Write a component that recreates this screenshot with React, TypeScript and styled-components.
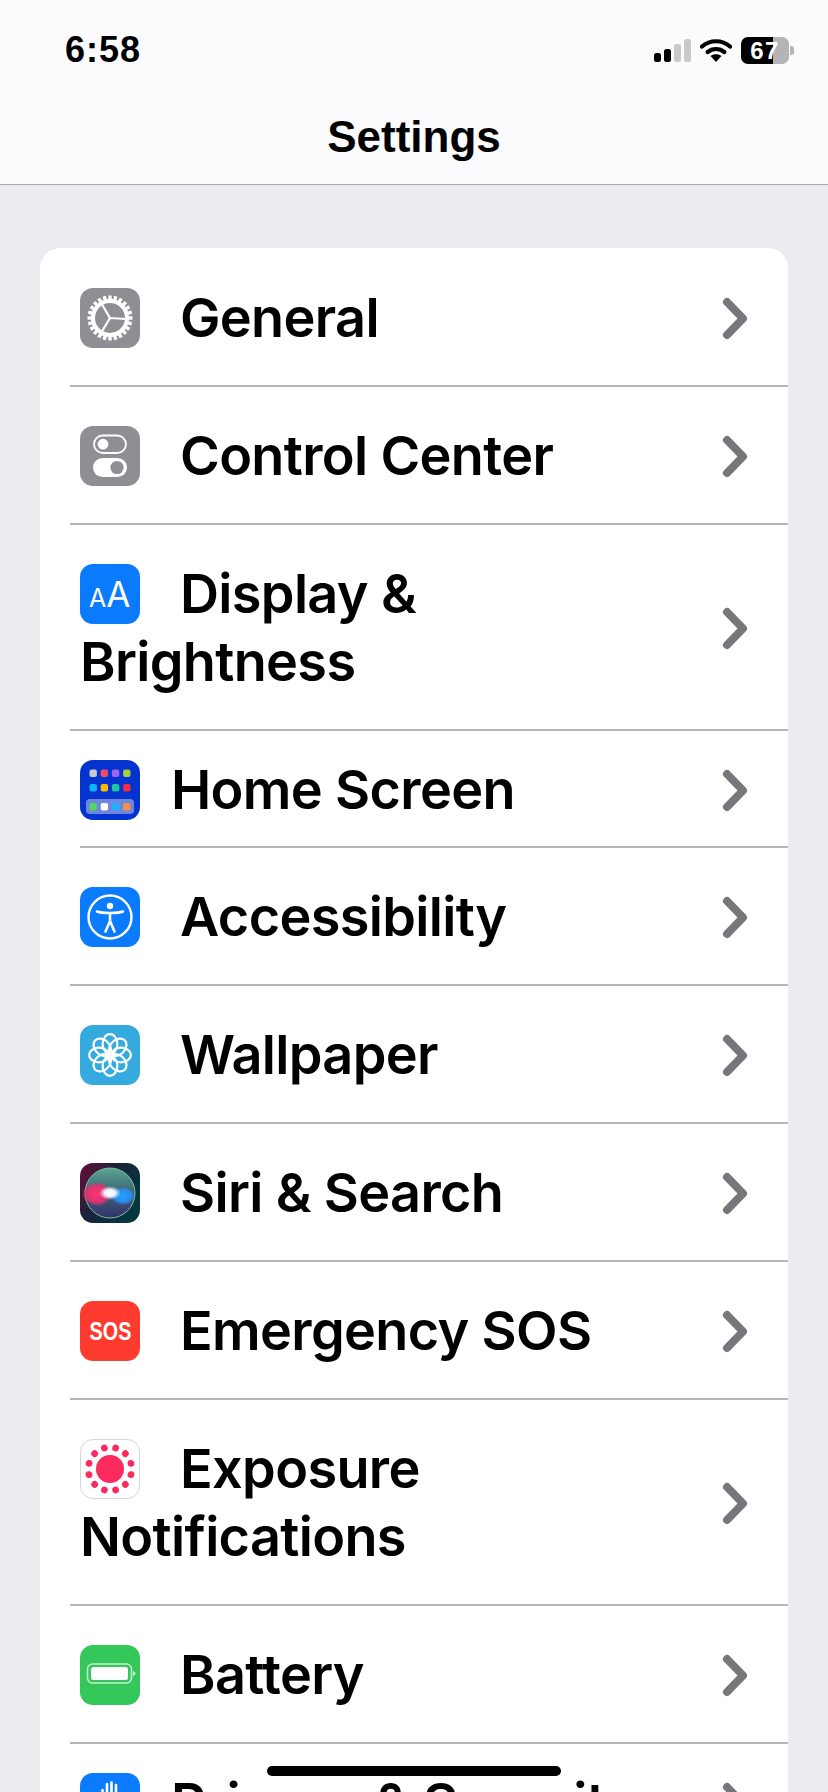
import React from 'react';
import styled, { createGlobalStyle } from 'styled-components';

const GlobalStyle = createGlobalStyle`
    html, body {
        margin: 0;
        padding: 0;
        height: 1792px;
        overflow: hidden;
        background: #ebebf0;
        font-family: Inter, "Liberation Sans", sans-serif;
    }
`;

const Page = styled.div`
    position: relative;
    width: 828px;
    height: 1792px;
    overflow: hidden;
    background: #ebebf0;
`;

const NavBar = styled.header`
    height: 184px;
    background: #fbfbfe;
    border-bottom: 1px solid #a9a9ac;
    display: flex;
    flex-direction: column;
`;

const StatusBar = styled.div`
    display: flex;
    justify-content: space-between;
    align-items: center;
    height: 50px;
    padding: 25px 34px 0 65px;
`;

const Clock = styled.span`
    font-family: "Liberation Sans", sans-serif;
    font-weight: 700;
    font-size: 36px;
    letter-spacing: 1px;
    color: #000;
`;

const StatusIcons = styled.div`
    display: flex;
    align-items: center;
    gap: 9px;
`;

const BatteryBody = styled.div`
    width: 48px;
    height: 27px;
    border-radius: 7px;
    overflow: hidden;
    background: linear-gradient(to right, #000 0 67%, #b4b4b6 67% 100%);
    color: #fff;
    font-family: "Liberation Sans", sans-serif;
    font-weight: 700;
    font-size: 24px;
    line-height: 27px;
    text-align: center;
    letter-spacing: 1.5px;
`;

const BatteryWrap = styled.div`
    display: flex;
    align-items: center;
    gap: 1px;
`;

const BatteryNub = styled.div`
    width: 4px;
    height: 9px;
    border-radius: 0 3px 3px 0;
    background: #b4b4b6;
`;

const Title = styled.h1`
    margin: 0;
    padding-top: 39px;
    text-align: center;
    font-family: "Liberation Sans", sans-serif;
    font-weight: 700;
    font-size: 44px;
    line-height: 46px;
    color: #000;
`;

const Card = styled.section`
    margin: 63px 40px 0;
    padding: 1px 0 0 30px;
    background: #fff;
    border-radius: 20px 20px 0 0;
`;

const Row = styled.div<{ $compact?: boolean }>`
    display: flex;
    align-items: center;
    justify-content: space-between;
    padding: ${p => (p.$compact ? '25px 0 22px' : '35px 0 33px')};
    margin-left: ${p => (p.$compact ? '10px' : '0')};
    border-bottom: 2px solid #b6b6b9;
`;

const Label = styled.div<{ $compact?: boolean }>`
    flex: 1;
    min-width: 0;
    padding: 0 40px 0 ${p => (p.$compact ? '0' : '10px')};
    font-size: 54px;
    line-height: 68px;
    font-weight: 600;
    letter-spacing: -0.65px;
    color: #000;
`;

const IconSlot = styled.span<{ $compact?: boolean }>`
    display: inline-block;
    overflow: hidden;
    vertical-align: -11px;
    width: 60px;
    height: 60px;
    margin-right: ${p => (p.$compact ? '31px' : '40px')};
`;

const IconSvg = styled.svg`
    display: block;
    width: 60px;
    height: 60px;
`;

const Chevron = styled.svg`
    flex: none;
    width: 27px;
    height: 43px;
    margin-right: 39px;
`;

const HomeBar = styled.div`
    position: absolute;
    left: 267px;
    top: 1766px;
    width: 294px;
    height: 10px;
    border-radius: 5px;
    background: #000;
`;

const SosTile = styled.span`
    display: flex;
    align-items: center;
    justify-content: center;
    width: 60px;
    height: 60px;
    border-radius: 13px;
    background: #ff3b30;
    color: #fff;
    font-family: "Liberation Sans", sans-serif;
    font-weight: 700;
    font-size: 26px;
    letter-spacing: 0;
    line-height: 60px;
`;

const SosText = styled.span`
    display: inline-block;
    transform: scaleX(0.76);
`;

const TileLetters = styled.text`
    font-family: Inter, sans-serif;
    font-weight: 400;
    font-size: 35px;
    letter-spacing: 0;
    fill: #fff;
`;

const SmallLetter = styled.tspan`
    font-size: 25px;
`;

const SignalIcon = () => (
    <svg width="37" height="23" viewBox="0 0 37 23">
        <rect x="0" y="14" width="7" height="9" rx="2.5" fill="#000" />
        <rect x="10" y="10" width="7" height="13" rx="2.5" fill="#000" />
        <rect x="20" y="5" width="7" height="18" rx="2.5" fill="#c9c9cb" />
        <rect x="30" y="0" width="7" height="23" rx="2.5" fill="#c9c9cb" />
    </svg>
);

const WifiIcon = () => (
    <svg width="32" height="24" viewBox="0 0 32 24">
        <path d="M2 8.5 C10 1.5 22 1.5 30 8.5" fill="none" stroke="#000" strokeWidth="4.2" strokeLinecap="round" />
        <path d="M7.6 14 C12.5 10 19.5 10 24.4 14" fill="none" stroke="#000" strokeWidth="4.2" strokeLinecap="round" />
        <path d="M16 24 L10.5 18 C13.5 15.8 18.5 15.8 21.5 18 Z" fill="#000" />
    </svg>
);

const Tile = ({ fill, children }: { fill: string; children?: React.ReactNode }) => (
    <IconSvg viewBox="0 0 60 60">
        <rect width="60" height="60" rx="13" fill={fill} />
        {children}
    </IconSvg>
);

const gearTeeth = Array.from({ length: 24 }, (_, i) => (i * 360) / 24);

const GeneralIcon = () => (
    <Tile fill="#8e8e93">
        <g fill="none" stroke="#fff">
            {gearTeeth.map(a => (
                <line key={a} x1="30" y1="7.5" x2="30" y2="14" strokeWidth="3.4" transform={`rotate(${a} 30 30)`} />
            ))}
            <circle cx="30" cy="30" r="17" strokeWidth="4" />
            <path d="M30 30 L46 31 M30 30 L21.5 15.5 M30 30 L21 45" strokeWidth="2.2" />
        </g>
    </Tile>
);

const ControlIcon = () => (
    <Tile fill="#8e8e93">
        <rect x="14" y="9.5" width="32" height="17.5" rx="8.75" fill="none" stroke="#fff" strokeWidth="1.8" />
        <circle cx="23" cy="18.2" r="5.4" fill="#fff" />
        <rect x="13" y="32" width="34" height="19" rx="9.5" fill="#fff" />
        <circle cx="37" cy="41.5" r="6.6" fill="#8e8e93" />
    </Tile>
);

const DisplayIcon = () => (
    <Tile fill="#0a7aff">
        <TileLetters x="9" y="43">
            <SmallLetter>A</SmallLetter>
            <tspan>A</tspan>
        </TileLetters>
    </Tile>
);

const homeDots = [
    ['#c8c8cf', '#ee4a6c', '#a463f2', '#a3d13f'],
    ['#12b5f4', '#fcb700', '#1fc89a', '#f5303e'],
];
const dockDots = ['#4fd964', '#ffffff', '#1ab5f5', '#f7914a'];

const HomeIcon = () => (
    <Tile fill="#0433d0">
        {homeDots.map((row, y) =>
            row.map((c, x) => <rect key={`${x}${y}`} x={9.5 + x * 11.2} y={9.5 + y * 14.5} width="7.4" height="7.4" rx="2" fill={c} />)
        )}
        <rect x="6" y="39" width="48" height="15" rx="4" fill="#6e86dd" />
        {dockDots.map((c, x) => (
            <rect key={c} x={9.5 + x * 11.2} y="43" width="7.4" height="7.4" rx="2" fill={c} />
        ))}
    </Tile>
);

const AccessIcon = () => (
    <Tile fill="#0a7aff">
        <circle cx="30" cy="30" r="21.5" fill="none" stroke="#fff" strokeWidth="2.4" />
        <circle cx="30" cy="19" r="3.2" fill="#fff" />
        <path d="M17 24.5 C22 26.5 38 26.5 43 24.5 M30 26 V35 M30 34 L25.5 44.5 M30 34 L34.5 44.5" fill="none" stroke="#fff" strokeWidth="2.6" strokeLinecap="round" />
    </Tile>
);

const WallpaperIcon = () => (
    <Tile fill="#35aadf">
        <g fill="none" stroke="#fff" strokeWidth="2.2">
            {[0, 45, 90, 135, 180, 225, 270, 315].map(a => (
                <ellipse key={a} cx="30" cy="19" rx="7.4" ry="9.8" transform={`rotate(${a} 30 30)`} />
            ))}
        </g>
        <circle cx="30" cy="30" r="3.6" fill="#fff" />
    </Tile>
);

const SiriIcon = () => (
    <IconSvg viewBox="0 0 60 60">
        <defs>
            <linearGradient id="siriBg" x1="0" y1="0" x2="1" y2="0.6">
                <stop offset="0" stopColor="#6a0c36" />
                <stop offset="0.5" stopColor="#17243c" />
                <stop offset="1" stopColor="#04383c" />
            </linearGradient>
            <linearGradient id="siriOrb" x1="0.5" y1="0" x2="0.5" y2="1">
                <stop offset="0" stopColor="#5aa58e" />
                <stop offset="0.45" stopColor="#3d6a78" />
                <stop offset="1" stopColor="#35306a" />
            </linearGradient>
            <radialGradient id="siriGlow">
                <stop offset="0" stopColor="#fff" />
                <stop offset="0.5" stopColor="#f2f8ff" stopOpacity="0.95" />
                <stop offset="1" stopColor="#c6e4ff" stopOpacity="0" />
            </radialGradient>
            <radialGradient id="siriPink">
                <stop offset="0" stopColor="#ff3672" />
                <stop offset="0.7" stopColor="#ea2f70" stopOpacity="0.9" />
                <stop offset="1" stopColor="#e0306f" stopOpacity="0" />
            </radialGradient>
            <radialGradient id="siriBlue">
                <stop offset="0" stopColor="#1fa6ff" />
                <stop offset="0.7" stopColor="#2a8cf5" stopOpacity="0.9" />
                <stop offset="1" stopColor="#3a8cff" stopOpacity="0" />
            </radialGradient>
        </defs>
        <rect width="60" height="60" rx="13" fill="url(#siriBg)" />
        <circle cx="30" cy="30" r="25" fill="url(#siriOrb)" stroke="#86b8a6" strokeWidth="1" />
        <ellipse cx="17" cy="31" rx="15" ry="12" fill="url(#siriPink)" />
        <ellipse cx="43" cy="33" rx="12" ry="9" fill="url(#siriBlue)" />
        <ellipse cx="30" cy="30" rx="11" ry="7" fill="url(#siriGlow)" />
    </IconSvg>
);

const exposureDots = Array.from({ length: 12 }, (_, i) => 15 + i * 30);

const ExposureIcon = () => (
    <Tile fill="#fff">
        <rect x="0.5" y="0.5" width="59" height="59" rx="12.5" fill="none" stroke="#d6d6da" />
        <circle cx="30" cy="30" r="14" fill="#fb2b60" />
        {exposureDots.map(a => (
            <circle key={a} cx="30" cy="8.3" r="3.4" fill="#fb2b60" transform={`rotate(${a} 30 30)`} />
        ))}
    </Tile>
);

const BatteryIcon = () => (
    <Tile fill="#34c759">
        <rect x="7.5" y="19" width="44" height="19" rx="5" fill="none" stroke="#c4efcf" strokeWidth="1.6" />
        <rect x="11" y="22" width="37" height="13" rx="2.5" fill="#fff" />
        <path d="M53 25.5 L56 28.5 L53 31.5 Z" fill="#c4efcf" />
    </Tile>
);

const PrivacyIcon = () => (
    <Tile fill="#0a7aff">
        <g fill="none" stroke="#fff" strokeWidth="2.6" strokeLinecap="round">
            <path d="M22.5 17 V32 M27 11 V32 M31.5 9.5 V32 M36 12 V32" />
        </g>
        <path d="M21 24 H38 V40 H21 Z" fill="#fff" />
    </Tile>
);

const RowChevron = () => (
    <Chevron viewBox="0 0 27 43">
        <path d="M5 5 L21 21.5 L5 38" fill="none" stroke="#77777b" strokeWidth="8" strokeLinecap="round" strokeLinejoin="round" />
    </Chevron>
);

type Item = { icon: React.ReactNode; text: string; compact?: boolean };

const items: Item[] = [
    { icon: <GeneralIcon />, text: 'General' },
    { icon: <ControlIcon />, text: 'Control Center' },
    { icon: <DisplayIcon />, text: 'Display & Brightness' },
    { icon: <HomeIcon />, text: 'Home Screen', compact: true },
    { icon: <AccessIcon />, text: 'Accessibility' },
    { icon: <WallpaperIcon />, text: 'Wallpaper' },
    { icon: <SiriIcon />, text: 'Siri & Search' },
    { icon: <SosTile><SosText>SOS</SosText></SosTile>, text: 'Emergency SOS' },
    { icon: <ExposureIcon />, text: 'Exposure Notifications' },
    { icon: <BatteryIcon />, text: 'Battery' },
    { icon: <PrivacyIcon />, text: 'Privacy & Security', compact: true },
];

const App: React.FC = () => {
    return (
        <Page>
            <GlobalStyle />
            <NavBar>
                <StatusBar>
                    <Clock>6:58</Clock>
                    <StatusIcons>
                        <SignalIcon />
                        <WifiIcon />
                        <BatteryWrap>
                            <BatteryBody>67</BatteryBody>
                            <BatteryNub />
                        </BatteryWrap>
                    </StatusIcons>
                </StatusBar>
                <Title>Settings</Title>
            </NavBar>
            <Card>
                {items.map(item => (
                    <Row key={item.text} $compact={item.compact}>
                        <Label $compact={item.compact}>
                            <IconSlot $compact={item.compact}>{item.icon}</IconSlot>
                            {item.text}
                        </Label>
                        <RowChevron />
                    </Row>
                ))}
            </Card>
            <HomeBar />
        </Page>
    );
};

export default App;
